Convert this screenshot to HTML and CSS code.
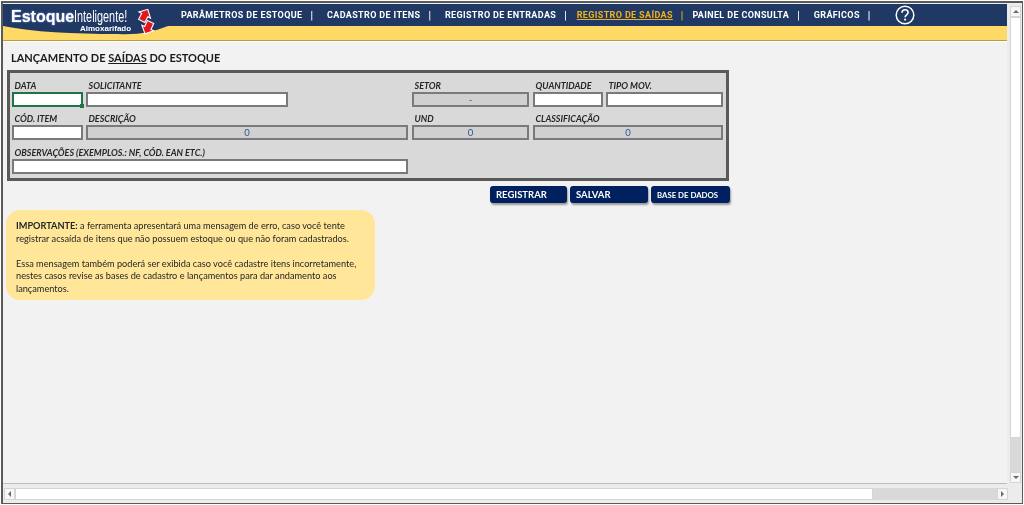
FILE: index.html
```html
<!DOCTYPE html>
<html lang="pt-BR">
<head>
<meta charset="utf-8">
<title>Lançamento de saídas do estoque</title>
<link rel="stylesheet" href="styles.css">
</head>
<body>
<div class="window">
  <div class="upper">
    <div class="sheet">
      <header class="header">
        <div class="navbar">
          <nav class="nav">
            <a class="nav-item">PARÂMETROS DE ESTOQUE</a><span class="sep">|</span>
            <a class="nav-item">CADASTRO DE ITENS</a><span class="sep">|</span>
            <a class="nav-item">REGISTRO DE ENTRADAS</a><span class="sep before-active">|</span>
            <a class="nav-item active">REGISTRO DE SAÍDAS</a><span class="sep active">|</span>
            <a class="nav-item">PAINEL DE CONSULTA</a><span class="sep">|</span>
            <a class="nav-item">GRÁFICOS</a><span class="sep">|</span>
          </nav>
          <svg class="help" viewBox="0 0 20 20" width="20" height="20" aria-label="Ajuda">
            <circle cx="10" cy="10" r="8.800" fill="none" stroke="#fff" stroke-width="1.500"/>
            <path d="M7 7.700c0-1.900 1.400-3 3.100-3s3 1.100 3 2.700c0 2.400-3 2.400-3 4.800" fill="none" stroke="#fff" stroke-width="1.600"/>
            <circle cx="10.100" cy="14.600" r="1.100" fill="#fff"/>
          </svg>
        </div>
        <div class="stripe"></div>
        <div class="logo">
          <svg class="logo-bg" viewBox="0 0 165 38" width="165" height="38" aria-hidden="true">
            <path d="M0 0H165V22C150 28 135 31 115 30C70 30 30 28 0 22Z" fill="#1f3864"/>
            <path transform="translate(141.500 11.500) rotate(28)" d="M0-7L6.500-.5H3.500V6H-3.500V-.5H-6.500Z" fill="#e8141c" stroke="#fff" stroke-width="1.100"/>
            <path transform="translate(145 23.500) rotate(205)" d="M0-7L6.500-.5H3.500V6H-3.500V-.5H-6.500Z" fill="#e8141c" stroke="#fff" stroke-width="1.100"/>
          </svg>
          <span class="logo-main">Estoque</span><span class="logo-alt">Inteligente!</span>
          <span class="logo-sub">Almoxarifado</span>
        </div>
      </header>

      <main class="content">
        <h1 class="title">LANÇAMENTO DE <span class="underline">SAÍDAS</span> DO ESTOQUE</h1>

        <section class="form-panel">
          <div class="field"><label class="label">DATA</label><div class="box input selected"></div></div>
          <div class="field"><label class="label">SOLICITANTE</label><div class="box input"></div></div>
          <div class="field"></div>
          <div class="field pad4"><label class="label">SETOR</label><div class="box calc dash">-</div></div>
          <div class="field"><label class="label">QUANTIDADE</label><div class="box input"></div></div>
          <div class="field flush"><label class="label">TIPO MOV.</label><div class="box input"></div></div>

          <div class="field"><label class="label">CÓD. ITEM</label><div class="box input"></div></div>
          <div class="field span2 pad4"><label class="label">DESCRIÇÃO</label><div class="box calc">0</div></div>
          <div class="field pad4"><label class="label">UND</label><div class="box calc">0</div></div>
          <div class="field span2 flush"><label class="label">CLASSIFICAÇÃO</label><div class="box calc">0</div></div>

          <div class="field span3 pad4"><label class="label">OBSERVAÇÕES (EXEMPLOS.: NF, CÓD. EAN ETC.)</label><div class="box input"></div></div>
        </section>

        <div class="actions">
          <button class="btn">REGISTRAR</button>
          <button class="btn mid">SALVAR</button>
          <button class="btn small">BASE DE DADOS</button>
        </div>

        <aside class="note">
          <p><b>IMPORTANTE:</b> a ferramenta apresentará uma mensagem de erro, caso você tente registrar acsaída de itens que não possuem estoque ou que não foram cadastrados.</p>
          <p>Essa mensagem também poderá ser exibida caso você cadastre itens incorretamente, nestes casos revise as bases de cadastro e lançamentos para dar andamento aos lançamentos.</p>
        </aside>
      </main>
    </div>

    <div class="vscroll">
      <div class="sb-btn"><span class="tri up"></span></div>
      <div class="v-thumb"></div>
      <div class="v-track"></div>
      <div class="sb-btn"><span class="tri down"></span></div>
    </div>
  </div>

  <div class="hscroll">
    <div class="sb-btn"><span class="tri left"></span></div>
    <div class="h-thumb"></div>
    <div class="h-track"></div>
    <div class="sb-btn"><span class="tri right"></span></div>
  </div>
</div>
</body>
</html>
```
FILE: styles.css
```css
* { box-sizing: border-box; }
html, body { margin: 0; padding: 0; }
body {
  width: 1024px;
  height: 505px;
  overflow: hidden;
  background: #fff;
  font-family: "Lato", "Liberation Sans", sans-serif;
}
.window {
  width: 1022px;
  height: 503px;
  margin: 1px 0 0 1px;
  border: 2px solid #5a5a5a;
  border-right-width: 1px;
  border-bottom-width: 1px;
  padding: 1px 0 0 0;
  background: #ececec;
  display: flex;
  flex-direction: column;
  filter: blur(.3px);
}
.upper { flex: 1; display: flex; min-height: 0; }
.sheet {
  width: 1004px;
  display: flex;
  flex-direction: column;
  background: #f2f2f2;
  border-bottom: 1px solid #bdbdbd;
}

/* header */
.header { position: relative; }
.navbar {
  height: 22px;
  background: #1f3864;
  display: flex;
  align-items: center;
  padding-left: 178px;
}
.nav { display: flex; align-items: center; }
.nav-item {
  font-family: "Roboto", sans-serif;
  font-weight: 700;
  font-size: 9px;
  letter-spacing: .36px;
  color: #fff;
  white-space: nowrap;
}
.nav-item.active { color: #f2b21b; text-decoration: underline; }
.sep {
  font-family: "Roboto", sans-serif;
  font-weight: 700;
  font-size: 10px;
  color: #fff;
  margin: 0 14px 0 8px;
}
.sep.before-active { margin-right: 10px; }
.sep.active { color: #f2b21b; margin-right: 9px; }
.help { margin-left: 11px; }
.stripe {
  height: 15px;
  background: #ffd966;
  border-bottom: 1px solid #b59b4a;
  box-shadow: 0 1px 0 #fff;
}
.logo {
  position: absolute;
  left: 0;
  top: 0;
  width: 165px;
  height: 38px;
}
.logo-bg { position: absolute; left: 0; top: 0; }
.logo-main {
  position: absolute;
  left: 8px;
  top: 4px;
  font-family: "Liberation Sans", sans-serif;
  font-weight: 700;
  font-size: 16px;
  color: #fff;
  text-shadow: 0 0 2px #8e9fd0, 0 0 1px #8e9fd0;
}
.logo-alt {
  position: absolute;
  left: 71px;
  top: 4px;
  font-family: "Liberation Sans", sans-serif;
  font-size: 16px;
  color: #fff;
  transform: scaleX(.68);
  transform-origin: left center;
}
.logo-sub {
  position: absolute;
  left: 77px;
  top: 20px;
  font-family: "Liberation Sans", sans-serif;
  font-weight: 700;
  font-size: 8px;
  color: #fff;
}

/* content */
.content { flex: 1; padding: 9px 0 0 3px; min-height: 0; }
.title {
  margin: 0 0 5px 5px;
  font-size: 11px;
  line-height: 15px;
  font-weight: 700;
  color: #1a1a1a;
}
.underline { text-decoration: underline; }

.form-panel {
  width: 722px;
  height: 111px;
  margin-left: 1px;
  background: #d9d9d9;
  border: 3px solid #595959;
  padding: 1px 0 0 2px;
  display: grid;
  grid-template-columns: 74px 205px 121px 121px 73px 117px;
  grid-template-rows: 33px 33px 34px;
}
.field { padding-right: 3px; display: flex; flex-direction: column; justify-content: flex-end; }
.field.pad4 { padding-right: 4px; }
.field.flush { padding-right: 0; }
.span2 { grid-column: span 2; }
.span3 { grid-column: span 3; }
.label {
  padding-left: 2.500px;
  font-size: 9px;
  line-height: 12px;
  font-weight: 700;
  font-style: italic;
  color: #262626;
  white-space: nowrap;
}
.box {
  height: 15px;
  border: 2px solid #7a7a7a;
  text-align: center;
  font-size: 9.500px;
  line-height: 11px;
  color: #2f5597;
  position: relative;
}
.input { background: #fff; }
.calc { background: #d0d0d0; }
.dash { color: #595959; }
.selected { border-color: #217346; }
.selected::after {
  content: "";
  position: absolute;
  right: -3px;
  bottom: -3px;
  width: 4px;
  height: 4px;
  background: #217346;
}

.actions {
  width: 723px;
  margin: 5px 0 0 1px;
  display: flex;
  justify-content: flex-end;
  gap: 3px;
}
.btn {
  width: 77px;
  height: 17px;
  padding: 0 0 0 6px;
  border: none;
  border-radius: 3px;
  background: #002060;
  box-shadow: 1px 2px 2px #9a9a9a;
  color: #fff;
  font-family: "Lato", sans-serif;
  font-weight: 700;
  font-size: 9.500px;
  text-align: left;
}
.btn.mid { width: 78px; }
.btn.small { font-size: 7.800px; width: 79px; }

.note {
  width: 369px;
  height: 90px;
  margin-top: 7px;
  padding: 10px 10px 0 10px;
  background: #ffe699;
  border-radius: 14px;
  font-size: 9.200px;
  line-height: 12.500px;
  color: #262626;
}
.note p { margin: 0 0 12.500px; }

/* scrollbars */
.vscroll {
  width: 14px;
  padding: 2px 0 1px 3px;
  display: flex;
  flex-direction: column;
  background: #ececec;
}
.v-thumb { height: 421px; flex: none; background: #fff; border: 1px solid #d5d5d5; }
.v-track { flex: 1; background: #d9d9d9; }
.hscroll {
  height: 19px;
  padding: 4px 14px 3px 1px;
  display: flex;
  align-items: stretch;
  background: #ececec;
}
.h-thumb { width: 858px; background: #fff; border: 1px solid #d5d5d5; }
.h-track { flex: 1; background: #d9d9d9; }
.sb-btn {
  width: 11px;
  min-height: 11px;
  flex: none;
  background: #f7f7f7;
  border: 1px solid #d5d5d5;
  display: flex;
  align-items: center;
  justify-content: center;
}
.tri { width: 0; height: 0; border: 3px solid transparent; }
.tri.up { border-bottom-color: #6a6a6a; border-top-width: 0; }
.tri.down { border-top-color: #6a6a6a; border-bottom-width: 0; }
.tri.left { border-right-color: #6a6a6a; border-left-width: 0; }
.tri.right { border-left-color: #6a6a6a; border-right-width: 0; }
```
